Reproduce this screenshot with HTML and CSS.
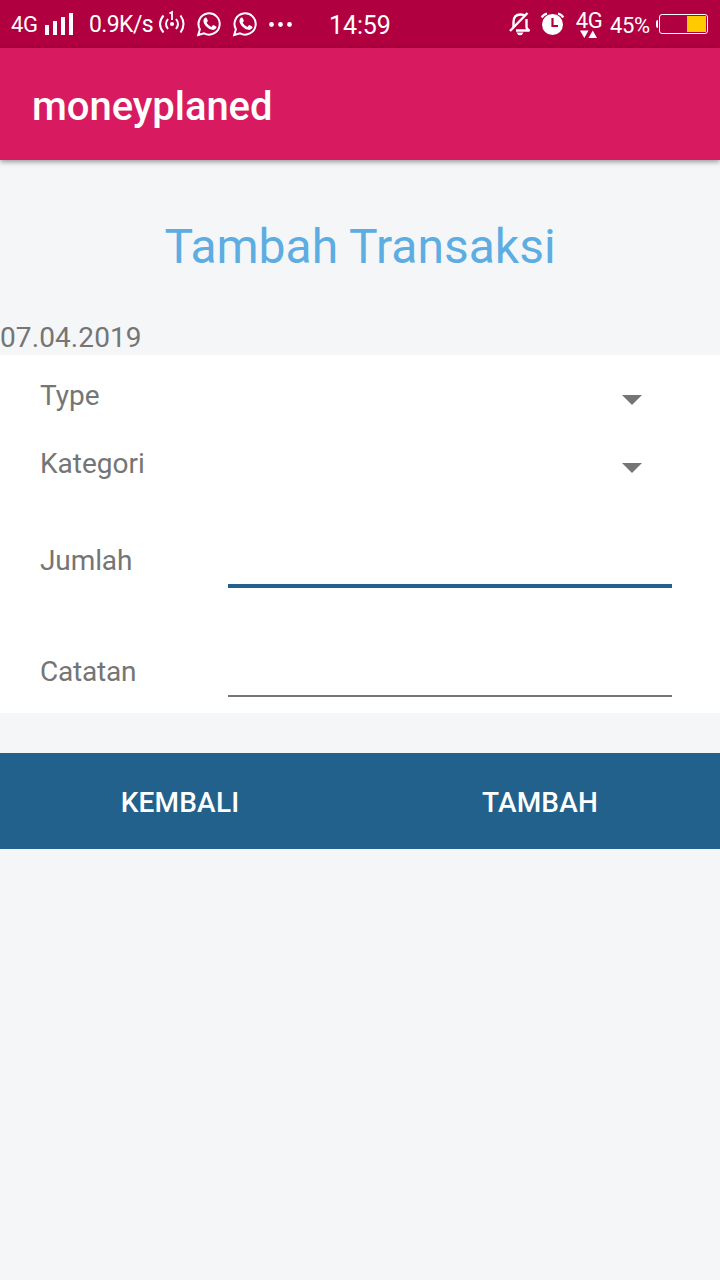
FILE: index.html
```html
<!DOCTYPE html>
<html lang="id">
<head>
<meta charset="utf-8">
<title>moneyplaned</title>
<link rel="stylesheet" href="styles.css">
</head>
<body>
<div class="status">
  <span class="net">4G</span>
  <svg class="signal" width="30" height="48" viewBox="0 0 30 48" fill="#fff"><path d="M1 25h4v10H1zM9 21h4v14H9zM17 17h4v18h-4zM25 13h4v22h-4z"/></svg>
  <span class="speed">0.9K/s</span>
  <svg class="hotspot" width="28" height="48" viewBox="0 0 28 48" fill="none" stroke="#fff" stroke-width="2"><path d="M5.500 15.500Q-1.500 24 5.500 32.500M10 19Q6 24 10 29M22.500 15.500q6 8.500 0 17M18 19q4 5 0 10"/><path d="M11.500 13.500l2.500-1.500v8" stroke-width="1.800"/><circle cx="14" cy="24" r="2.100" fill="#fff" stroke="none"/></svg>
  <svg class="wa" width="26" height="48" viewBox="0 0 26 48"><path d="M2.200 35l1.700-5.800a10.600 10.600 0 1 1 4.200 4.100z" fill="none" stroke="#fff" stroke-width="2"/><path d="M8.400 18.200q1.600-1.500 2.500.2l.9 2.100q.2.800-1.200 2.200 1.700 3 4.700 4.200l1.600-1.700q.5-.4 1 0l2.200 1.200q.8.500.2 1.700-1.300 2.200-4 1.700-3.700-.7-6.600-3.900-3.800-4.300-1.300-7.700z" fill="#fff"/></svg>
  <svg class="wa" width="26" height="48" viewBox="0 0 26 48"><path d="M2.200 35l1.700-5.800a10.600 10.600 0 1 1 4.200 4.100z" fill="none" stroke="#fff" stroke-width="2"/><path d="M8.400 18.200q1.600-1.500 2.500.2l.9 2.100q.2.800-1.200 2.200 1.700 3 4.700 4.200l1.600-1.700q.5-.4 1 0l2.200 1.200q.8.500.2 1.700-1.300 2.200-4 1.700-3.700-.7-6.600-3.900-3.800-4.300-1.300-7.700z" fill="#fff"/></svg>
  <svg class="more" width="26" height="48" viewBox="0 0 26 48" fill="#fff"><circle cx="3.500" cy="24.500" r="2.400"/><circle cx="12.500" cy="24.500" r="2.400"/><circle cx="21.500" cy="24.500" r="2.400"/></svg>
  <span class="clock">14:59</span>
  <svg class="mute" width="24" height="48" viewBox="0 0 24 48" fill="none" stroke="#fff" stroke-width="2.400"><path d="M5.500 27v-5q0-7.500 7-7.500 3 0 5 1.500M18.500 19v8q0 2 3 3.500H8"/><path d="M2 31L19.500 13"/><path d="M8.500 32.500h7q-1 2.800-3.500 2.800t-3.500-2.800z" fill="#fff" stroke="none"/></svg>
  <svg class="alarm" width="26" height="48" viewBox="0 0 26 48"><circle cx="12.500" cy="24.500" r="10.500" fill="#fff"/><path d="M1.800 17.500Q3 14.500 7 13.600M23.200 17.500Q22 14.500 18 13.600" fill="none" stroke="#fff" stroke-width="2.200"/><path d="M12.500 18v8H18" fill="none" stroke="#b0003f" stroke-width="2.200"/></svg>
  <span class="data"><span class="data-text">4G</span><svg width="18" height="9" viewBox="0 0 18 9" fill="#fff"><path d="M0 .5h8.500L4.300 8zM8.500 8H17L12.800.5z"/></svg></span>
  <span class="percent">45%</span>
  <svg class="battery" width="54" height="48" viewBox="0 0 54 48"><path d="M3 20q-2 0-2 2v4q0 2 2 2z" fill="#fff"/><rect x="4.500" y="14.500" width="48" height="19" rx="2.500" fill="none" stroke="#fff"/><path d="M32 16h19v16H32z" fill="#ffca00"/></svg>
</div>
<header class="appbar">moneyplaned</header>
<main>
  <h1 class="heading">Tambah Transaksi</h1>
  <div class="date">07.04.2019</div>
  <section class="form">
    <div class="spinner"><span>Type</span><svg width="20" height="10" viewBox="0 0 20 10"><path d="M0 0h20L10 10z" fill="#757575"/></svg></div>
    <div class="spinner"><span>Kategori</span><svg width="20" height="10" viewBox="0 0 20 10"><path d="M0 0h20L10 10z" fill="#757575"/></svg></div>
    <div class="field amount"><label class="label" for="jumlah">Jumlah</label><input class="input focused" id="jumlah" type="text"></div>
    <div class="field note"><label class="label" for="catatan">Catatan</label><input class="input" id="catatan" type="text"></div>
  </section>
  <div class="actions"><button class="action">KEMBALI</button><button class="action">TAMBAH</button></div>
</main>
</body>
</html>
```
FILE: styles.css
```css
* { box-sizing: border-box; }
body {
  margin: 0;
  min-height: 1280px;
  background: #f4f6f8;
  color: #757575;
  font-family: Roboto, "Noto Sans", sans-serif;
  font-size: 28px;
  line-height: 34px;
}
svg { display: block; flex: none; }
.status {
  display: flex;
  height: 48px;
  background: #b0003f;
  color: #fff;
  font-size: 22px;
  line-height: 48px;
  white-space: nowrap;
}
.status > span { flex: none; }
.net { width: 33px; margin-left: 11px; padding-top: 1px; letter-spacing: -.3px; }
.speed { width: 69px; margin-left: 15px; padding-top: 1px; font-size: 23px; letter-spacing: -.6px; }
.wa { margin-left: 10px; }
.more { margin-left: 10px; }
.clock { width: 70px; margin-left: 35px; padding-top: 2px; font-size: 25px; letter-spacing: -.1px; }
.mute { margin-left: 109px; }
.alarm { margin-left: 8px; }
.data { display: flex; flex-direction: column; align-items: center; width: 28px; margin-left: 9px; padding-top: 10px; line-height: 22px; letter-spacing: -.3px; }
.data-text { height: 20px; }
.percent { width: 40px; margin-left: 7px; padding-top: 2px; letter-spacing: -.4px; }
.battery { margin-left: 5px; }
.appbar {
  position: relative;
  height: 112px;
  padding: 5px 32px 0;
  background: #d81b60;
  box-shadow: 0 2px 5px rgba(0, 0, 0, .38);
  color: #fff;
  font-size: 40px;
  font-weight: 500;
  line-height: 108px;
  letter-spacing: -.05px;
}
.heading {
  margin: 0;
  padding: 58px 0 62px;
  color: #5dade2;
  font-size: 48px;
  font-weight: 400;
  line-height: 57px;
  text-align: center;
}
.date { height: 18px; padding-top: 1px; line-height: 0; letter-spacing: .1px; }
.form { height: 358px; padding: 6px 48px 0 40px; background: #fff; }
.spinner { display: flex; align-items: center; justify-content: space-between; height: 68px; padding-right: 30px; }
.spinner span { padding-top: 2px; }
.spinner svg { margin-top: 9px; }
.field { display: flex; align-items: flex-end; }
.amount { height: 91px; }
.note { height: 109px; }
.label { width: 188px; margin-bottom: 10px; letter-spacing: -.1px; }
.note .label { margin-bottom: 8px; letter-spacing: -.2px; }
.input { flex: 1; min-width: 0; height: 52px; padding: 0; border: 0; border-bottom: 2px solid #757575; outline: 0; background: none; font: inherit; }
.input.focused { border-bottom: 4px solid #21618c; }
.actions { display: grid; grid-template-columns: 1fr 1fr; height: 96px; margin-top: 40px; background: #21618c; }
.action { padding: 3px 0 0; border: 0; background: none; color: #fff; font: 500 28px/34px Roboto, "Noto Sans", sans-serif; letter-spacing: .2px; }
```
